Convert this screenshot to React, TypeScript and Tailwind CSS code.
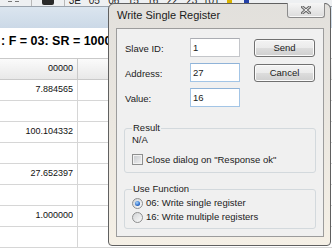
const toolLabels = ["3E", "05", "06", "15", "16", "22", "23", "101"];
const cells = ["7.884565", "", "100.104332", "", "27.652397", "", "1.000000", ""];

function Toolbar() {
  return (
    <div className="flex h-[9px] items-start overflow-hidden border-b border-[#9aa3ad] bg-[#eef0f2] text-[10px] leading-[10px] text-[#222]">
      <div className="ml-[8px] mt-[1px] h-[1px] w-[4px] bg-[#777]" />
      <div className="ml-[3px] mt-[1px] h-[1px] w-[4px] bg-[#777]" />
      <div className="ml-[12px] h-[6px] w-[1px] bg-[#b8b8b8]" />
      <div className="ml-[10px] h-[5px] w-[12px] rounded-b-[2px] bg-[#2a2a2a]" />
      <div className="ml-[10px] h-[6px] w-[1px] bg-[#b8b8b8]" />
      {toolLabels.map((t) => (
        <div key={t} className="flex w-[19.5px] justify-center">
          <span className="-mt-[4px] block">{t}</span>
        </div>
      ))}
      <div className="ml-[6px] h-[3px] w-[5px] bg-[#d9b300]" />
      <div className="ml-[12px] h-[3px] w-[5px] bg-[#2340a8]" />
    </div>
  );
}

function MainWindow() {
  return (
    <div className="flex h-full flex-col">
      <Toolbar />
      <div className="h-[28px] bg-gradient-to-b from-[#dbe5ef] to-[#cbd9e7]" />
      <div className="h-[37px] pl-[1px] pt-[6px] text-[12.5px] font-bold leading-[14px]">
        : F = 03: SR = 1000ms
      </div>
      <div className="border-t border-[#c9c9c9] text-[9px] text-[#111]">
        <div className="flex h-[21px] border-b border-[#c9c9c9] bg-gradient-to-b from-[#fbfbfb] to-[#e8e8e8]">
          <div className="flex w-[78px] items-center justify-end border-r border-[#c9c9c9] pr-[4px]">
            00000
          </div>
          <div className="flex-1" />
        </div>
        {cells.map((v, i) => (
          <div key={i} className="flex h-[21px] border-b border-[#d6d6d6]">
            <div className="flex w-[78px] items-center justify-end border-r border-[#d6d6d6] pr-[4px]">
              {v}
            </div>
            <div className="flex-1" />
          </div>
        ))}
      </div>
    </div>
  );
}

function CloseButton() {
  return (
    <div className="-mt-[1px] ml-auto mr-[5px] flex h-[15px] w-[38px] items-center justify-center rounded-b-[3px] border border-t-0 border-[#8c8c8c] bg-gradient-to-b from-[#f6f6f6] to-[#dcdcdc] shadow-[inset_0_-1px_0_#f8f8f8]">
      <svg width="10" height="8" viewBox="0 0 10 8">
        <path d="M1.5 1 L8.5 7 M8.5 1 L1.5 7" stroke="#6c6c6c" strokeWidth="3" strokeLinecap="square" />
        <path d="M1.5 1 L8.5 7 M8.5 1 L1.5 7" stroke="#f4f4f4" strokeWidth="1" strokeLinecap="square" />
      </svg>
    </div>
  );
}

function Field({ label, value, focus }: { label: string; value: string; focus?: boolean }) {
  return (
    <div className="flex h-[19px] items-center">
      <span className="w-[65px] pt-[3px]">{label}</span>
      <div
        className={
          focus
            ? "flex h-[19px] w-[50px] items-center border border-[#a3c5e6] border-t-[#8fb3d8] bg-white pl-[2px]"
            : "flex h-[19px] w-[50px] items-center border border-[#c4c6ca] border-t-[#abadb3] bg-white pl-[2px]"
        }
      >
        {value}
      </div>
    </div>
  );
}

function Button({ children }: { children: string }) {
  return (
    <div className="flex h-[18px] w-[61px] items-center justify-center rounded-[3px] border border-[#707070] bg-[linear-gradient(#f3f3f3_0%,#ebebeb_50%,#dddddd_50%,#cfcfcf_100%)] shadow-[inset_0_0_0_1px_#fbfbfb]">
      {children}
    </div>
  );
}

function Radio({ checked, label }: { checked?: boolean; label: string }) {
  return (
    <div className="mt-[2px] flex h-[12px] items-center">
      <span className="flex h-[11px] w-[11px] items-center justify-center rounded-full border border-[#8e8f8f] bg-gradient-to-br from-[#d2d4d6] to-[#fbfbfb]">
        {checked && (
          <span className="h-[5px] w-[5px] rounded-full bg-[radial-gradient(circle_at_40%_35%,#a8d8ff,#1d5cbf_70%)]" />
        )}
      </span>
      <span className="ml-[3px]">{label}</span>
    </div>
  );
}

function WriteDialog() {
  return (
    <div className="absolute left-[108px] top-[3px] flex h-[243px] w-[223px] flex-col rounded-t-[6px] rounded-b-[4px] border border-[#606060] bg-gradient-to-b from-[#e2e0dc] via-[#ebe7e0] to-[#f5f0e6] font-['Liberation_Sans',Arial,sans-serif] text-[9.5px] leading-[12px] text-[#1b1b1b]">
      <div className="flex h-[24px] items-start">
        <span className="pl-[8px] pt-[5px] text-[11px] leading-[13px]">Write Single Register</span>
        <CloseButton />
      </div>
      <div className="mb-[8px] ml-[7px] mr-[6px] flex flex-1 flex-col border border-[#9c9c9c] bg-[#f0f0f0]">
        <div className="flex pl-[8px] pt-[9px]">
          <div className="flex flex-col gap-[6px]">
            <Field label="Slave ID:" value="1" />
            <Field label="Address:" value="27" focus />
            <Field label="Value:" value="16" focus />
          </div>
          <div className="ml-[14px] flex flex-col gap-[7px] pt-[1px]">
            <Button>Send</Button>
            <Button>Cancel</Button>
          </div>
        </div>
        <fieldset className="mx-[7px] mt-[15px] rounded-[3px] border border-[#d3d9dd] px-[7px] pb-[6px]">
          <legend className="px-[1px] leading-[12px]">Result</legend>
          <div className="h-[12px]">N/A</div>
          <div className="mt-[7px] flex h-[13px] items-center">
            <span className="h-[11px] w-[11px] border border-[#8e8f8f] bg-gradient-to-br from-[#c4c7cb] to-[#f4f4f4] shadow-[inset_0_0_0_1px_#f2f2f2]" />
            <span className="ml-[3px]">Close dialog on "Response ok"</span>
          </div>
        </fieldset>
        <fieldset className="mx-[7px] mt-[10px] rounded-[3px] border border-[#d3d9dd] px-[7px] pb-[5px]">
          <legend className="px-[1px] leading-[12px]">Use Function</legend>
          <Radio checked label="06: Write single register" />
          <Radio label="16: Write multiple registers" />
        </fieldset>
      </div>
    </div>
  );
}

export default function App() {
  return (
    <div className="relative h-[248px] w-[332px] overflow-hidden bg-white font-['Liberation_Sans',Arial,sans-serif] text-black">
      <MainWindow />
      <WriteDialog />
    </div>
  );
}
